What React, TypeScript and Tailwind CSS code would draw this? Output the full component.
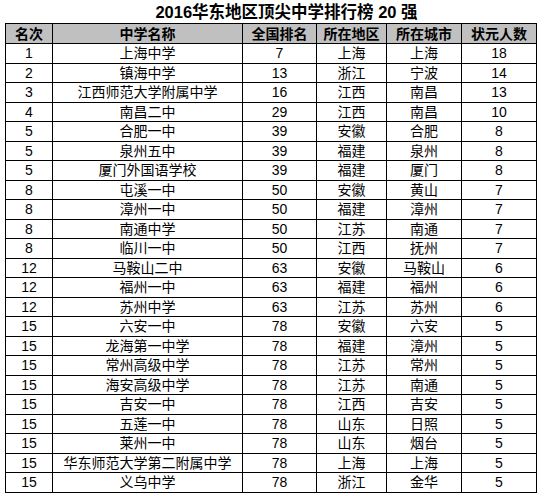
import React from "react";

const rows: [string, string, string, string, string, string][] = [
  ["1", "上海中学", "7", "上海", "上海", "18"],
  ["2", "镇海中学", "13", "浙江", "宁波", "14"],
  ["3", "江西师范大学附属中学", "16", "江西", "南昌", "13"],
  ["4", "南昌二中", "29", "江西", "南昌", "10"],
  ["5", "合肥一中", "39", "安徽", "合肥", "8"],
  ["5", "泉州五中", "39", "福建", "泉州", "8"],
  ["5", "厦门外国语学校", "39", "福建", "厦门", "8"],
  ["8", "屯溪一中", "50", "安徽", "黄山", "7"],
  ["8", "漳州一中", "50", "福建", "漳州", "7"],
  ["8", "南通中学", "50", "江苏", "南通", "7"],
  ["8", "临川一中", "50", "江西", "抚州", "7"],
  ["12", "马鞍山二中", "63", "安徽", "马鞍山", "6"],
  ["12", "福州一中", "63", "福建", "福州", "6"],
  ["12", "苏州中学", "63", "江苏", "苏州", "6"],
  ["15", "六安一中", "78", "安徽", "六安", "5"],
  ["15", "龙海第一中学", "78", "福建", "漳州", "5"],
  ["15", "常州高级中学", "78", "江苏", "常州", "5"],
  ["15", "海安高级中学", "78", "江苏", "南通", "5"],
  ["15", "吉安一中", "78", "江西", "吉安", "5"],
  ["15", "五莲一中", "78", "山东", "日照", "5"],
  ["15", "莱州一中", "78", "山东", "烟台", "5"],
  ["15", "华东师范大学第二附属中学", "78", "上海", "上海", "5"],
  ["15", "义乌中学", "78", "浙江", "金华", "5"],
];

const headers = ["名次", "中学名称", "全国排名", "所在地区", "所在城市", "状元人数"];

export default function App() {
  return (
    <div className="w-[539px] h-[495px] bg-white text-black font-['Liberation_Sans','Noto_Sans_CJK_SC',sans-serif]">
      <h1 className="h-[23px] pt-[2px] pl-[34px] text-center text-[16.5px] font-bold leading-[20px]">
        2016华东地区顶尖中学排行榜 20 强
      </h1>
      <table className="ml-[5px] w-[531px] table-fixed border-collapse text-[14px] leading-none">
        <colgroup>
          <col className="w-[47px]" />
          <col className="w-[190px]" />
          <col className="w-[74px]" />
          <col className="w-[70px]" />
          <col className="w-[75px]" />
          <col className="w-[75px]" />
        </colgroup>
        <thead>
          <tr className="h-[20px] bg-[#c0c0c0]">
            {headers.map((h) => (
              <th key={h} className="border border-black p-0 text-center font-bold">
                {h}
              </th>
            ))}
          </tr>
        </thead>
        <tbody>
          {rows.map((r, i) => (
            <tr key={i} className="h-[19.5px]">
              {r.map((c, j) => (
                <td key={j} className="border border-black p-0 text-center">
                  {c}
                </td>
              ))}
            </tr>
          ))}
        </tbody>
      </table>
    </div>
  );
}
